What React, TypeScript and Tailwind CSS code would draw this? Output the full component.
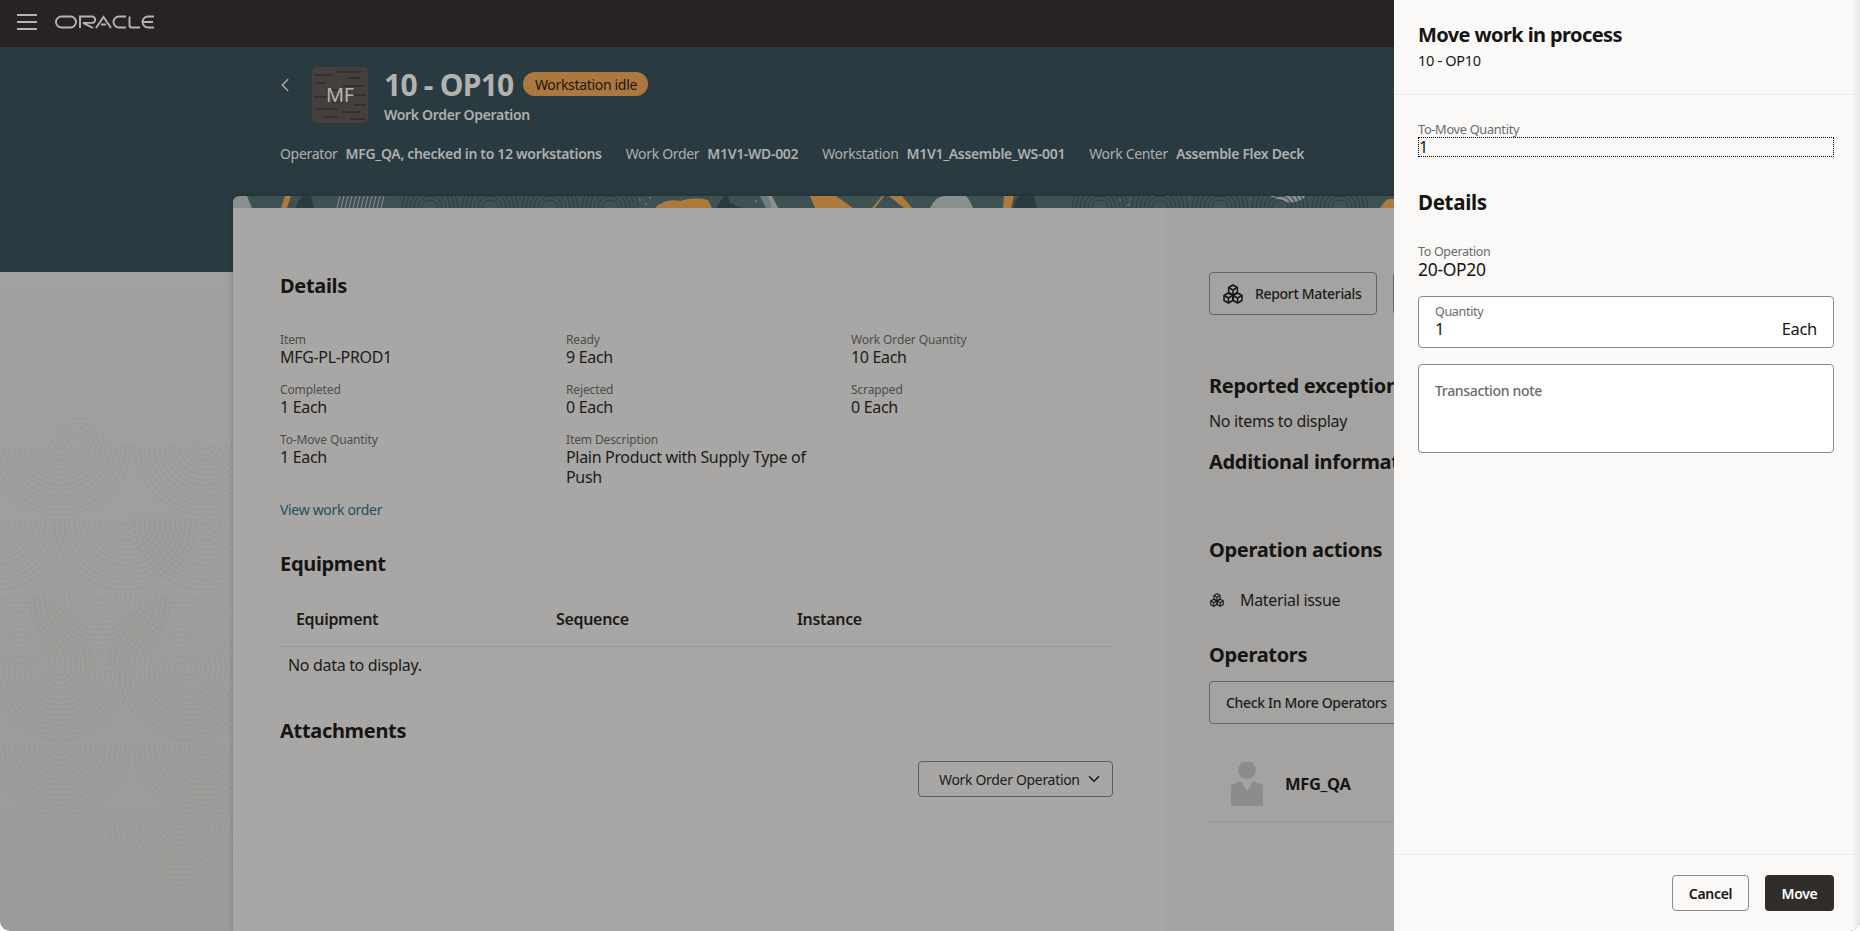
import { ChevronDown, ChevronLeft } from "lucide-react";

const font = "font-['Noto_Sans','Open_Sans',sans-serif] tracking-[-0.02em]";

const details = [
  { label: "Item", value: "MFG-PL-PROD1" },
  { label: "Ready", value: "9 Each" },
  { label: "Work Order Quantity", value: "10 Each" },
  { label: "Completed", value: "1 Each" },
  { label: "Rejected", value: "0 Each" },
  { label: "Scrapped", value: "0 Each" },
  { label: "To-Move Quantity", value: "1 Each" },
  { label: "Item Description", value: "Plain Product with Supply Type of Push" },
];

const meta = [
  { label: "Operator", value: "MFG_QA, checked in to 12 workstations" },
  { label: "Work Order", value: "M1V1-WD-002" },
  { label: "Workstation", value: "M1V1_Assemble_WS-001" },
  { label: "Work Center", value: "Assemble Flex Deck" },
];

function OracleLogo() {
  return (
    <svg width="100" height="14" viewBox="0 0 100 14" fill="none" stroke="#b5b4b2" strokeWidth="1.9">
      <rect x="1" y="1.5" width="20" height="11" rx="5.5" />
      <path d="M25 13V1.5H37a3.2 3.2 0 0 1 0 6.4H28L38 13" />
      <path d="M41 13L48.5 2L56 13M46 9.5H51" />
      <path d="M71 1.5H64a5.5 5.5 0 0 0 0 11H71" />
      <path d="M74.5 1.5V10.5a2 2 0 0 0 2 2H85" />
      <path d="M99 1.5H93a5.5 5.5 0 0 0 0 11H99M88 7H98" />
    </svg>
  );
}

function Cubes({ size }: { size: number }) {
  const hex = (x: number, y: number) => (
    <g key={`${x}-${y}`}>
      <path d={`M${x} ${y - 5}L${x + 4.4} ${y - 2.5}V${y + 2.5}L${x} ${y + 5}L${x - 4.4} ${y + 2.5}V${y - 2.5}Z`} />
      <path d={`M${x - 4.4} ${y - 2.5}L${x} ${y}L${x + 4.4} ${y - 2.5}M${x} ${y}V${y + 5}`} />
    </g>
  );
  return (
    <svg width={size} height={size} viewBox="0 0 20 20" fill="none" stroke="#161513" strokeWidth="1.5" strokeLinejoin="round">
      {hex(10, 6)}
      {hex(5.4, 14)}
      {hex(14.6, 14)}
    </svg>
  );
}

function Tile() {
  const dashes = [
    [2, 8, 18], [24, 5, 26], [36, 11, 12], [4, 16, 10], [30, 19, 22], [14, 23, 20],
    [2, 30, 12], [40, 28, 14], [20, 35, 16], [42, 38, 12], [4, 42, 22], [30, 45, 18],
    [12, 50, 14], [38, 52, 16],
  ];
  return (
    <div className="relative flex h-[56px] w-[56px] items-center justify-center overflow-hidden rounded-[5px] bg-[#45403d] text-[20px] text-[#b5b4b2]">
      <svg className="absolute inset-0" width="56" height="56" stroke="#26221f" strokeWidth="1">
        {dashes.map(([x, y, w]) => (
          <path key={`${x}-${y}`} d={`M${x} ${y}h${w}`} />
        ))}
      </svg>
      <span className="relative">MF</span>
    </div>
  );
}

// strip of artwork along the top edge of the card
function Banner() {
  const arcs = [430, 490, 550, 610, 1100, 1160, 1220, 1280, 1340];
  return (
    <svg className="block h-[12px] w-full" viewBox="233 196 1394 12" preserveAspectRatio="none">
      <rect x="233" y="196" width="1394" height="12" fill="#3e5254" />
      <path d="M233 208V199Q240 194 247 196L252 208Z" fill="#8b8e8e" />
      <path d="M285 196H291L287 208H281Z" fill="#ad7a3e" />
      <path d="M296 208Q299 196 305 196H311L314 208Z" fill="#293b40" />
      <path d="M716 208L724 196H728L732 208Z" fill="#293b40" />
      <path d="M765 196H772L778 208H770Z" fill="#8b8e8e" />
      <path d="M810 196H836L853 208H815Z" fill="#ad7a3e" />
      <path d="M872 208L882 196H884L875 208Z" fill="#ad7a3e" />
      <path d="M889 196H902L912 208H904Z" fill="#ad7a3e" />
      <path d="M930 208Q936 196 944 196H966Q970 200 973 208Z" fill="#8b8e8e" />
      <path d="M1004 196H1014L1011 208H1003Z" fill="#ad7a3e" />
      <path d="M1014 208Q1015 196 1022 196H1034L1037 208Z" fill="#293b40" />
      <path d="M1270 196H1306Q1298 204 1286 202Z" fill="#8b8e8e" />
      <path d="M655 208Q665 198 680 201Q695 196 708 200L712 208Z" fill="#ad7a3e" />
      <path d="M724 208Q730 200 736 206L742 208Z" fill="#293b40" />
      <path d="M760 196H768L772 208H766Z" fill="#6f7c7c" />
      <path d="M1380 208Q1386 197 1394 199V208Z" fill="#ad7a3e" />
      <g fill="none" stroke="#293b40" strokeWidth="1">
        {arcs.map((x) =>
          [8, 12, 16, 20, 24, 28].map((r) => (
            <path key={`${x}-${r}`} d={`M${x - r} 208a${r} ${r} 0 0 1 ${r * 2} 0`} />
          )),
        )}
      </g>
      <g stroke="#8b8e8e" strokeWidth="1">
        {[340, 344, 348, 352, 356, 360, 364, 368, 372, 376, 380, 384].map((x) => (
          <path key={x} d={`M${x} 196l-3 12`} />
        ))}
      </g>
      <g fill="#6f7c7c">
        {[[640, 200], [646, 204], [650, 198], [756, 201], [1120, 200], [1128, 205]].map(([x, y]) => (
          <circle key={`${x}-${y}`} cx={x} cy={y} r="1" />
        ))}
      </g>
    </svg>
  );
}

// faint concentric arcs on the page background
function ArcPattern() {
  // x, y, 1 = bowl hanging below y, 0 = dome above y, largest radius (y from the top of the svg)
  const arcs = [
    [78, 172, 0, 26], [60, 172, 1, 71], [205, 172, 1, 71], [205, 247, 1, 71], [125, 247, 1, 71], [-5, 247, 1, 71],
    [20, 396, 0, 71], [100, 322, 1, 71], [180, 396, 0, 71], [60, 397, 1, 71], [190, 397, 1, 71],
    [60, 472, 1, 71], [205, 472, 1, 71], [180, 547, 1, 71],
  ];
  const radii = [6, 11, 16, 21, 26, 31, 36, 41, 46, 51, 56, 61, 66, 71];
  return (
    <svg className="absolute left-0 top-0" width="233" height="659" fill="none" stroke="#8f8e8c" strokeOpacity="0.3" strokeWidth="1.2">
      {arcs.map(([cx, cy, bowl, max]) =>
        radii
          .filter((rad) => rad <= max)
          .map((rad) => (
            <path key={`${cx}-${cy}-${rad}`} d={`M${cx - rad} ${cy}a${rad} ${rad} 0 0 ${bowl ? 0 : 1} ${rad * 2} 0`} />
          )),
      )}
    </svg>
  );
}

function Heading({ children, className = "" }: { children: React.ReactNode; className?: string }) {
  return <h2 className={`whitespace-nowrap text-[20px] font-bold leading-[28px] text-[#161513] ${className}`}>{children}</h2>;
}

export default function App() {
  return (
    <div className={`relative h-[931px] w-[1860px] overflow-hidden rounded-b-[10px] bg-black ${font}`}>
      <div className="h-full bg-gradient-to-b from-[#a4a3a1] to-[#9c9b99]">
        <div className="flex h-[47px] items-center gap-[18px] bg-[#272322] pb-[3px] pl-[17px]">
          <div className="flex w-[20px] flex-col gap-[5px]">
            <span className="h-[2px] bg-[#b5b4b2]" />
            <span className="h-[2px] bg-[#b5b4b2]" />
            <span className="h-[2px] bg-[#b5b4b2]" />
          </div>
          <OracleLogo />
        </div>

        <div className="h-[225px] bg-[#293b40] pl-[280px] pt-[20px]">
          <div className="flex">
            <ChevronLeft className="mt-[7px] -ml-[6px] mr-[16px]" size={22} strokeWidth={1.4} color="#b0afad" />
            <Tile />
            <div className="ml-[16px]">
              <div className="flex items-center gap-[10px]">
                <span className="text-[30px] font-bold leading-[36px] tracking-[-0.025em] text-[#b3b2b0]">10 - OP10</span>
                <span className="flex h-[24px] w-[125px] -translate-y-px items-center justify-center rounded-full bg-[#ac783f] text-[14px] text-[#1c1713]">
                  Workstation idle
                </span>
              </div>
              <div className="mt-[2px] text-[14px] font-semibold leading-[20px] text-[#b0afad]">Work Order Operation</div>
            </div>
          </div>
          <div className="mt-[19px] flex gap-[24px] text-[14px] leading-[20px] text-[#b0afad]">
            {meta.map((m) => (
              <div key={m.label} className="flex gap-[8px]">
                <span>{m.label}</span>
                <span className="font-semibold">{m.value}</span>
              </div>
            ))}
          </div>
        </div>

        <div className="relative">
          <ArcPattern />
        </div>

        <div className="relative -mt-[76px] ml-[233px] h-[735px] w-[1394px] overflow-hidden rounded-t-[6px] bg-[#a8a7a5] shadow-[0_0_4px_rgba(0,0,0,0.25)]">
          <Banner />
          <div className="flex">
            <section className="w-[932px] pl-[47px] pr-[52px] pt-[64px]">
              <Heading>Details</Heading>
              <div className="mt-[31px] grid grid-cols-[286px_285px_285px] gap-y-[14px]">
                {details.map((d) => (
                  <div key={d.label} className="w-[270px]">
                    <div className="translate-y-px text-[12px] leading-[16px] tracking-[-0.01em] text-[#4d4c4a]">{d.label}</div>
                    <div className="text-[16px] leading-[20px] text-[#1c1b19]">{d.value}</div>
                  </div>
                ))}
              </div>
              <div className="mt-[13px] text-[14px] leading-[20px] text-[#1e4f62]">View work order</div>

              <Heading className="mt-[30px]">Equipment</Heading>
              <div className="mt-[16px] flex h-[53px] items-center border-b border-[#979694] pb-[2px] pl-[16px] text-[16px] font-semibold text-[#1c1b19]">
                <span className="w-[260px]">Equipment</span>
                <span className="w-[241px]">Sequence</span>
                <span>Instance</span>
              </div>
              <div className="pl-[8px] pt-[8px] text-[16px] leading-[20px] text-[#1c1b19]">No data to display.</div>

              <Heading className="mt-[42px]">Attachments</Heading>
              <div className="mt-[16px] flex justify-end">
                <div className="flex h-[36px] w-[195px] items-center justify-between whitespace-nowrap rounded-[4px] border border-[#5f5e5c] pl-[20px] pr-[9px] text-[14px] text-[#1c1b19]">
                  Work Order Operation
                  <ChevronDown size={18} strokeWidth={2} color="#161513" />
                </div>
              </div>
            </section>

            <section className="h-[723px] w-[462px] bg-gradient-to-r from-[#a4a3a1] to-[#a5a4a2] pl-[44px] pt-[64px]">
              <div className="flex gap-[16px]">
                <div className="flex h-[43px] w-[168px] items-center gap-[12px] rounded-[4px] border border-[#646361] pl-[13px] text-[14px] font-medium text-[#1c1b19]">
                  <Cubes size={20} />
                  Report Materials
                </div>
                <div className="h-[43px] w-[168px] rounded-[4px] border border-[#646361]" />
              </div>
              <Heading className="mt-[57px]">Reported exceptions</Heading>
              <div className="mt-[11px] text-[16px] leading-[20px] text-[#1c1b19]">No items to display</div>
              <Heading className="mt-[17px]">Additional information</Heading>
              <Heading className="mt-[60px]">Operation actions</Heading>
              <div className="mt-[26px] flex items-center gap-[16px] pl-[1px] text-[16px] leading-[20px] text-[#1c1b19]">
                <Cubes size={14} />
                Material issue
              </div>
              <Heading className="mt-[31px]">Operators</Heading>
              <div className="mt-[12px] flex h-[43px] w-[210px] items-center whitespace-nowrap rounded-[4px] border border-[#646361] pl-[16px] text-[14px] font-medium text-[#1c1b19]">
                Check In More Operators
              </div>
              <div className="flex h-[98px] items-end border-b border-[#979694] pb-[15px] pl-[22px]">
                <svg width="32" height="44" viewBox="0 0 32 44" fill="#8a8c8e">
                  <circle cx="16" cy="8" r="9" />
                  <path d="M0 23L10 19L16 29L22 19L32 23V44H0Z" />
                </svg>
                <span className="mb-[12px] ml-[22px] text-[16.5px] font-bold leading-[20px] text-[#161513]">MFG_QA</span>
              </div>
            </section>
          </div>
          <div className="pointer-events-none absolute right-0 top-[12px] h-full w-[16px] bg-gradient-to-r from-transparent to-[#9b9a98]" />
        </div>
      </div>

      <aside className="absolute bottom-0 right-0 top-0 flex w-[466px] flex-col overflow-hidden rounded-br-[10px] bg-[#faf9f7]">
        <header className="h-[95px] border-b border-[#ecebe9] pl-[24px] pt-[21px]">
          <div className="text-[20px] font-bold leading-[28px] tracking-[-0.03em] text-[#161513]">Move work in process</div>
          <div className="mt-[1px] text-[14.5px] leading-[20px] text-[#161513]">10 - OP10</div>
        </header>
        <div className="flex-1 pl-[24px] pr-[26px] pt-[26px]">
          <div className="text-[12.8px] leading-[16px] text-[#6b6a68]">To-Move Quantity</div>
          <div className="flex h-[20px] items-center border border-dotted border-black text-[16px] leading-[16px] text-[#161513]">1</div>
          <div className="mt-[31px] text-[20.5px] font-bold leading-[28px] text-[#161513]">Details</div>
          <div className="mt-[28px] text-[12.5px] leading-[16px] text-[#6b6a68]">To Operation</div>
          <div className="-mt-px text-[17.5px] leading-[20px] text-[#161513]">20-OP20</div>
          <div className="mt-[17px] flex h-[52px] items-end justify-between rounded-[4px] border border-[#8b8a88] bg-white px-[16px] pb-[8px]">
            <div>
              <div className="translate-y-px text-[12.5px] leading-[16px] text-[#6b6a68]">Quantity</div>
              <div className="text-[16.5px] leading-[20px] text-[#161513]">1</div>
            </div>
            <div className="text-[16.5px] leading-[20px] text-[#161513]">Each</div>
          </div>
          <div className="mt-[16px] h-[89px] rounded-[4px] border border-[#8b8a88] bg-white pl-[16px] pt-[16px] text-[14px] font-medium leading-[20px] text-[#6b6a68]">
            Transaction note
          </div>
        </div>
        <footer className="flex h-[77px] justify-end gap-[16px] border-t border-[#ecebe9] pr-[26px] pt-[20px]">
          <div className="flex h-[36px] w-[77px] items-center justify-center rounded-[4px] border border-[#8b8a88] text-[14px] font-semibold text-[#161513]">Cancel</div>
          <div className="flex h-[36px] w-[69px] items-center justify-center rounded-[4px] bg-[#312d2a] text-[14px] font-semibold text-white">Move</div>
        </footer>
        <div className="pointer-events-none absolute bottom-0 right-0 top-0 w-[8px] bg-gradient-to-r from-transparent to-[#e8e7e5]" />
      </aside>
    </div>
  );
}
